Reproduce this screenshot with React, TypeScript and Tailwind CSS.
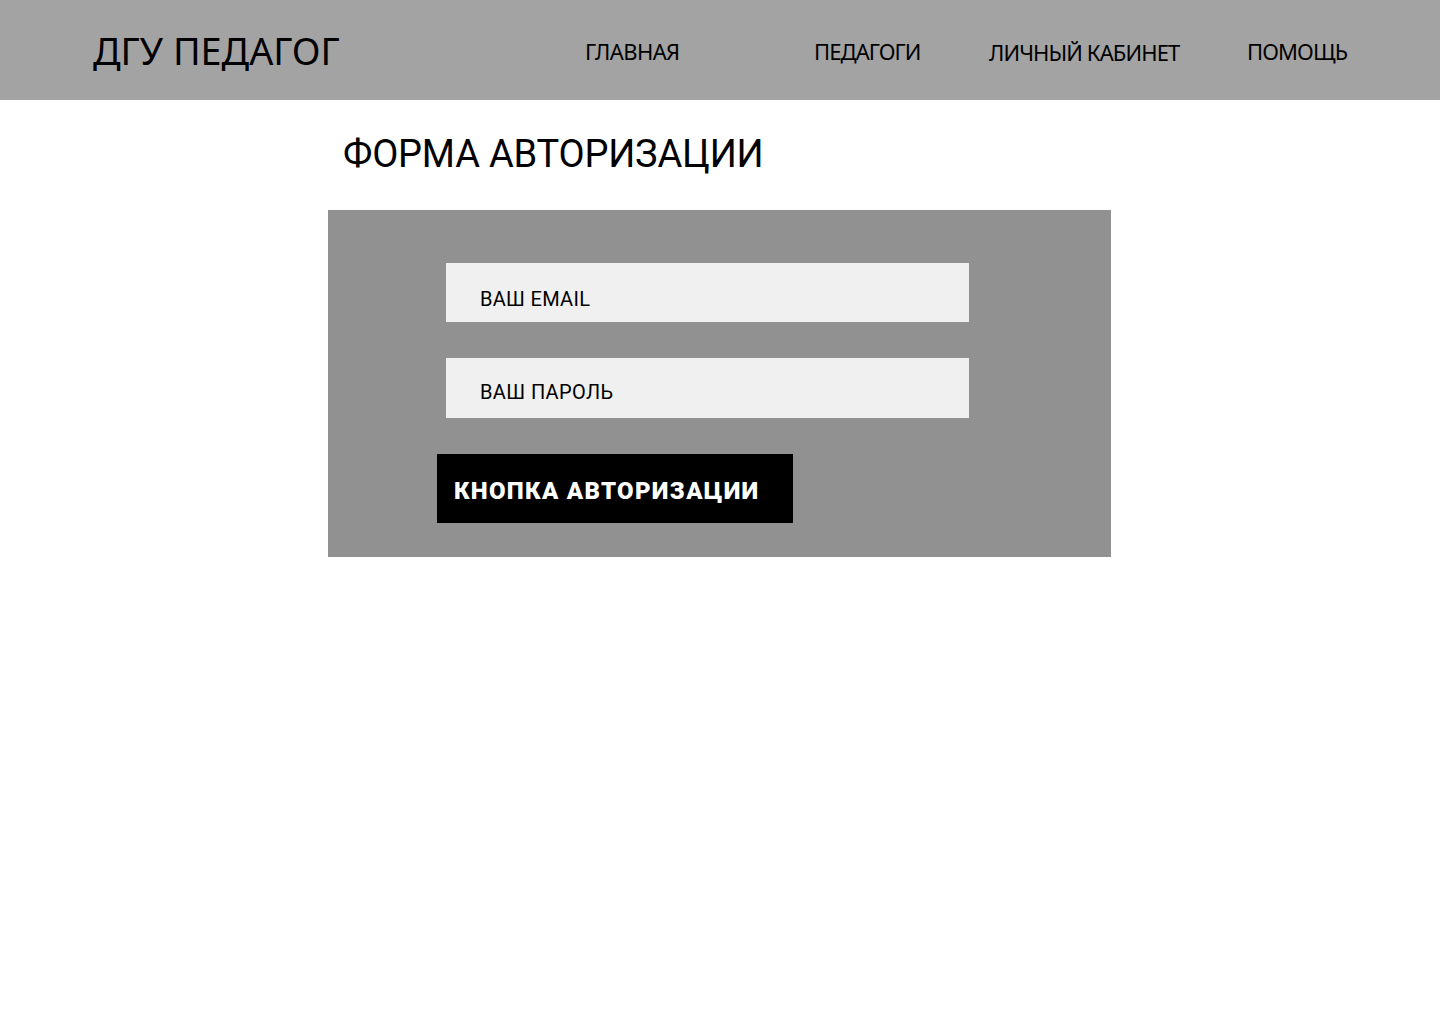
export default function App() {
  return (
    <div className="min-h-screen bg-white text-black font-['Roboto',sans-serif]">
      <Header />
      <main className="w-[783px] ml-[328px]">
        <h1 className="pl-[15px] pt-[29px] h-[110px] text-[38px] leading-[50px] font-normal tracking-[-0.2px]">
          ФОРМА АВТОРИЗАЦИИ
        </h1>
        <LoginForm />
      </main>
    </div>
  );
}

function Header() {
  return (
    <header className="h-[100px] bg-[#a3a3a3] flex items-center font-['Noto_Sans',sans-serif]">
      <div className="pl-[93px] w-[585px] text-[37.8px] leading-none mt-[2px]">
        ДГУ ПЕДАГОГ
      </div>
      <nav className="flex items-center text-[22px] tracking-[-0.9px] mt-[2px]">
        <a className="w-[229px] tracking-[-0.6px]">ГЛАВНАЯ</a>
        <a className="w-[175px]">ПЕДАГОГИ</a>
        <a className="w-[258px] mt-[2px]">ЛИЧНЫЙ КАБИНЕТ</a>
        <a>ПОМОЩЬ</a>
      </nav>
    </header>
  );
}

function LoginForm() {
  return (
    <div className="bg-[#919191] h-[347px] pt-[53px] pl-[118px]">
      <div className="w-[523px] h-[59px] bg-[#f0f0f0] pl-[34px] pt-[24px] text-[20px] leading-[24px] tracking-[0.3px]">
        ВАШ EMAIL
      </div>
      <div className="w-[523px] h-[60px] bg-[#f0f0f0] pl-[34px] pt-[22px] text-[20px] leading-[24px] tracking-[0.4px] mt-[36px]">
        ВАШ ПАРОЛЬ
      </div>
      <button className="block mt-[36px] -ml-[9px] w-[356px] h-[69px] bg-black text-white text-left pl-[17px] pt-[5px] text-[24px] font-black tracking-[1.3px]">
        КНОПКА АВТОРИЗАЦИИ
      </button>
    </div>
  );
}
